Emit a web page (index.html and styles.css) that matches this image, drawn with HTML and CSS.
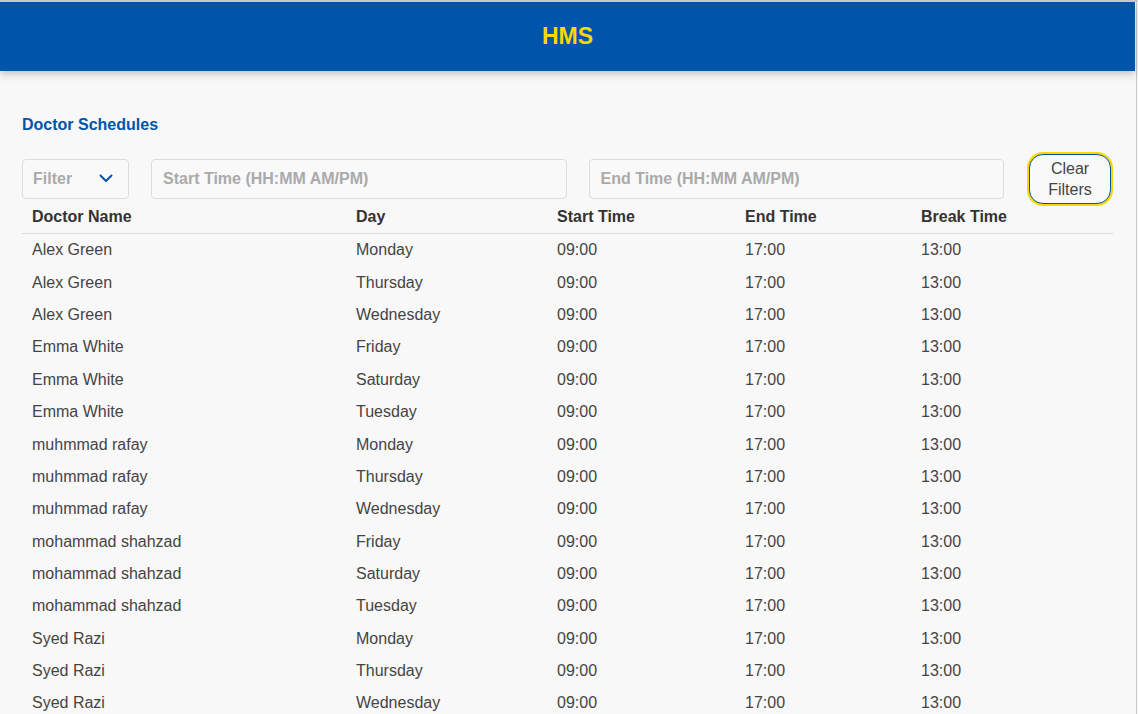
FILE: index.html
```html
<!DOCTYPE html>
<html lang="en">
<head>
<meta charset="utf-8">
<title>HMS</title>
<link rel="stylesheet" href="styles.css">
</head>
<body>
<div class="frame">
  <header class="topbar"><h1 class="brand">HMS</h1></header>
  <main class="content">
    <h2 class="page-title">Doctor Schedules</h2>
    <div class="filters">
      <div class="select">
        <span class="select-label">Filter</span>
        <svg class="chevron" width="14" height="9" viewBox="0 0 14 9"><path d="M1.5 1.5 L7 7 L12.5 1.5" fill="none" stroke="#0055aa" stroke-width="2" stroke-linecap="round" stroke-linejoin="round"/></svg>
      </div>
      <input class="field" type="text" placeholder="Start Time (HH:MM AM/PM)">
      <input class="field" type="text" placeholder="End Time (HH:MM AM/PM)">
      <button class="clear-btn" type="button">Clear Filters</button>
    </div>
    <table class="schedule">
      <thead>
        <tr><th class="c1">Doctor Name</th><th class="c2">Day</th><th class="c3">Start Time</th><th class="c4">End Time</th><th class="c5">Break Time</th></tr>
      </thead>
      <tbody>
        <tr><td>Alex Green</td><td>Monday</td><td>09:00</td><td>17:00</td><td>13:00</td></tr>
        <tr><td>Alex Green</td><td>Thursday</td><td>09:00</td><td>17:00</td><td>13:00</td></tr>
        <tr><td>Alex Green</td><td>Wednesday</td><td>09:00</td><td>17:00</td><td>13:00</td></tr>
        <tr><td>Emma White</td><td>Friday</td><td>09:00</td><td>17:00</td><td>13:00</td></tr>
        <tr><td>Emma White</td><td>Saturday</td><td>09:00</td><td>17:00</td><td>13:00</td></tr>
        <tr><td>Emma White</td><td>Tuesday</td><td>09:00</td><td>17:00</td><td>13:00</td></tr>
        <tr><td>muhmmad rafay</td><td>Monday</td><td>09:00</td><td>17:00</td><td>13:00</td></tr>
        <tr><td>muhmmad rafay</td><td>Thursday</td><td>09:00</td><td>17:00</td><td>13:00</td></tr>
        <tr><td>muhmmad rafay</td><td>Wednesday</td><td>09:00</td><td>17:00</td><td>13:00</td></tr>
        <tr><td>mohammad shahzad</td><td>Friday</td><td>09:00</td><td>17:00</td><td>13:00</td></tr>
        <tr><td>mohammad shahzad</td><td>Saturday</td><td>09:00</td><td>17:00</td><td>13:00</td></tr>
        <tr><td>mohammad shahzad</td><td>Tuesday</td><td>09:00</td><td>17:00</td><td>13:00</td></tr>
        <tr><td>Syed Razi</td><td>Monday</td><td>09:00</td><td>17:00</td><td>13:00</td></tr>
        <tr><td>Syed Razi</td><td>Thursday</td><td>09:00</td><td>17:00</td><td>13:00</td></tr>
        <tr><td>Syed Razi</td><td>Wednesday</td><td>09:00</td><td>17:00</td><td>13:00</td></tr>
      </tbody>
    </table>
  </main>
</div>
</body>
</html>
```
FILE: styles.css
```css
html {
  background: #f8f8f8;
}
body {
  margin: 0;
  font-family: "Liberation Sans", Arial, sans-serif;
  color: #444;
  border-top: 2px solid #c8c8c8;
}
.frame {
  margin-right: 1px;
  padding-right: 1px;
  border-right: 1px solid #c8c8c8;
}
.topbar {
  height: 69px;
  background: #0055aa;
  display: flex;
  align-items: center;
  justify-content: center;
  box-shadow: 0 3px 8px rgba(0, 0, 0, 0.22);
  position: relative;
}
.brand {
  margin: 0;
  font-size: 23px;
  font-weight: bold;
  color: #ffd700;
}
.content {
  padding: 45px 22px 0 22px;
}
.page-title {
  margin: 0;
  font-size: 16px;
  font-weight: bold;
  color: #0055aa;
  line-height: 18px;
}
.filters {
  margin-top: 22px;
  height: 45px;
  display: flex;
  align-items: center;
  gap: 22px;
}
.select {
  width: 107px;
  height: 40px;
  box-sizing: border-box;
  border: 1px solid #dcdcdc;
  border-radius: 4px;
  display: flex;
  align-items: center;
  justify-content: space-between;
  padding: 0 15px 0 10px;
  background: #f9f9f9;
}
.select-label {
  font-size: 16px;
  font-weight: bold;
  color: #aaa;
}
.chevron {
  display: block;
}
.field {
  flex: 1;
  min-width: 0;
  height: 40px;
  box-sizing: border-box;
  border: 1px solid #dcdcdc;
  border-radius: 4px;
  background: #f9f9f9;
  padding: 0 11px;
  font-family: "Liberation Sans", Arial, sans-serif;
  font-size: 16px;
  font-weight: bold;
  color: #444;
  outline: none;
}
.field::placeholder {
  color: #aaa;
}
.clear-btn {
  width: 82px;
  height: 50px;
  margin: 0 2px 0 3px;
  box-sizing: border-box;
  border: 1.5px solid #0055aa;
  border-radius: 14px;
  background: #f9f9f9;
  box-shadow: 0 0 0 2px #ffd700;
  font-family: "Liberation Sans", Arial, sans-serif;
  font-size: 16px;
  line-height: 21px;
  color: #444;
  padding: 0 8px;
  flex-shrink: 0;
}
.schedule {
  width: 100%;
  border-collapse: collapse;
  font-size: 16px;
  line-height: 18.36px;
}
.schedule th {
  text-align: left;
  font-weight: bold;
  color: #333;
  padding: 7px 10px;
  border-bottom: 1px solid #dcdcdc;
}
.schedule td {
  padding: 7px 10px;
  color: #444;
}
.c1 { width: 304px; }
.c2 { width: 181px; }
.c3 { width: 168px; }
.c4 { width: 156px; }
```
